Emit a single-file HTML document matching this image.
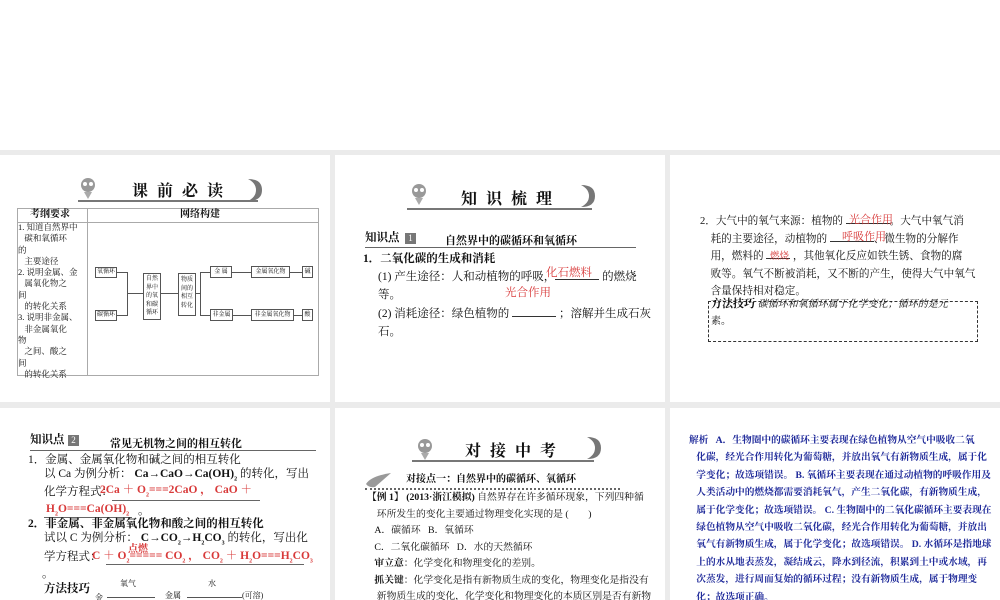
<!DOCTYPE html>
<html><head><meta charset="utf-8"><style>
*{margin:0;padding:0;box-sizing:border-box}
body{width:1000px;height:600px;background:#fff;position:relative;overflow:hidden;font-family:"Liberation Serif","Noto Serif CJK SC","Noto Sans CJK SC",serif;color:#111}
.bg{position:absolute;left:0;top:150px;width:1000px;height:450px;background:#ebebeb}
.s{position:absolute;background:#fff;overflow:hidden}
.a{position:absolute;white-space:nowrap}
.t{font-size:11.5px;line-height:18px}
.b{font-weight:bold}
.r{color:#d83a3a}
.hd{font-size:16px;font-weight:bold;letter-spacing:9px;font-family:"Noto Serif CJK SC",serif}
.ul{position:absolute;height:1px;background:#666}
.bx{position:absolute;border:1px solid #555;font-size:6px;line-height:8.5px;text-align:center;background:#fff;white-space:nowrap;overflow:hidden}
.ln{position:absolute;background:#555}
.bl{color:#1f2a9a;font-size:9.7px;font-weight:bold;line-height:17.4px}
</style></head><body>
<div class="bg"></div>

<!-- slide 1 -->
<div class="s" style="left:0;top:155px;width:330px;height:247px">
 <svg class="a" style="left:78px;top:22px" width="20" height="24" viewBox="0 0 20 24"><circle cx="10" cy="8" r="7" fill="#999"/><circle cx="7" cy="7" r="2" fill="#fff"/><circle cx="13" cy="7" r="2" fill="#fff"/><path d="M6 15 L10 22 L14 15" fill="#aaa"/></svg>
 <div class="a hd" style="left:132px;top:23px">课前必读</div>
 <div class="ul" style="left:78px;top:45px;width:180px;height:2px;background:#777"></div>
 <svg class="a" style="left:246px;top:22px" width="18" height="26"><path d="M2 2 Q16 2 16 13 Q16 24 2 24 Q10 20 10 13 Q10 6 2 2Z" fill="#777"/></svg>
 <div class="a" style="left:17px;top:53px;width:302px;height:168px;border:1px solid #aaa"></div>
 <div class="ln" style="left:17px;top:67px;width:302px;height:1px;background:#aaa"></div>
 <div class="ln" style="left:87px;top:53px;width:1px;height:168px;background:#aaa"></div>
 <div class="a b" style="left:30px;top:53px;font-size:10px;line-height:14px">考纲要求</div>
 <div class="a b" style="left:180px;top:53px;font-size:10px;line-height:14px">网络构建</div>
 <div class="a" style="left:18px;top:67px;font-size:8.5px;line-height:11.3px">1. 知道自然界中<br>&nbsp;&nbsp;&nbsp;碳和氧循环<br>的<br>&nbsp;&nbsp;&nbsp;主要途径<br>2. 说明金属、金<br>&nbsp;&nbsp;&nbsp;属氧化物之<br>间<br>&nbsp;&nbsp;&nbsp;的转化关系<br>3. 说明非金属、<br>&nbsp;&nbsp;&nbsp;非金属氧化<br>物<br>&nbsp;&nbsp;&nbsp;之间、酸之<br>间<br>&nbsp;&nbsp;&nbsp;的转化关系</div>
 <div class="bx" style="left:95px;top:112px;width:22px;height:11px">氧循环</div>
 <div class="bx" style="left:95px;top:155px;width:22px;height:11px">碳循环</div>
 <div class="ln" style="left:117px;top:117px;width:10px;height:1px"></div>
 <div class="ln" style="left:117px;top:160px;width:10px;height:1px"></div>
 <div class="ln" style="left:127px;top:117px;width:1px;height:44px"></div>
 <div class="ln" style="left:128px;top:138px;width:15px;height:1px"></div>
 <div class="bx" style="left:143px;top:118px;width:18px;height:47px;padding-top:1px">自然<br>界中<br>的氧<br>和碳<br>循环</div>
 <div class="ln" style="left:161px;top:138px;width:17px;height:1px"></div>
 <div class="bx" style="left:178px;top:118px;width:18px;height:43px;padding-top:2px">物质<br>间的<br>相互<br>转化</div>
 <div class="ln" style="left:196px;top:138px;width:5px;height:1px"></div>
 <div class="ln" style="left:200px;top:117px;width:1px;height:43px"></div>
 <div class="ln" style="left:200px;top:117px;width:10px;height:1px"></div>
 <div class="ln" style="left:200px;top:160px;width:10px;height:1px"></div>
 <div class="bx" style="left:210px;top:111px;width:22px;height:12px;line-height:10px">金 属</div>
 <div class="bx" style="left:210px;top:154px;width:23px;height:12px;line-height:10px">非金属</div>
 <div class="ln" style="left:232px;top:117px;width:19px;height:1px"></div>
 <div class="ln" style="left:233px;top:160px;width:18px;height:1px"></div>
 <div class="bx" style="left:251px;top:111px;width:39px;height:12px;line-height:10px">金属氧化物</div>
 <div class="bx" style="left:251px;top:154px;width:43px;height:12px;line-height:10px">非金属氧化物</div>
 <div class="ln" style="left:290px;top:117px;width:12px;height:1px"></div>
 <div class="ln" style="left:294px;top:160px;width:8px;height:1px"></div>
 <div class="bx" style="left:302px;top:111px;width:11px;height:12px;line-height:10px">碱</div>
 <div class="bx" style="left:302px;top:154px;width:11px;height:12px;line-height:10px">酸</div>
</div>

<!-- slide 2 -->
<div class="s" style="left:335px;top:155px;width:330px;height:247px">
 <svg class="a" style="left:74px;top:28px" width="20" height="24" viewBox="0 0 20 24"><circle cx="10" cy="8" r="7" fill="#999"/><circle cx="7" cy="7" r="2" fill="#fff"/><circle cx="13" cy="7" r="2" fill="#fff"/><path d="M6 15 L10 22 L14 15" fill="#aaa"/></svg>
 <div class="a hd" style="left:126px;top:31px">知识梳理</div>
 <div class="ul" style="left:72px;top:53px;width:185px;height:2px;background:#777"></div>
 <svg class="a" style="left:244px;top:28px" width="18" height="26"><path d="M2 2 Q16 2 16 13 Q16 24 2 24 Q10 20 10 13 Q10 6 2 2Z" fill="#777"/></svg>
 <div class="a t b" style="left:30px;top:74px">知识点</div>
 <div class="a" style="left:70px;top:78px;width:11px;height:11px;background:#777;color:#fff;font-size:9px;line-height:11px;text-align:center">1</div>
 <div class="a t b" style="left:110px;top:77px;font-size:11px">自然界中的碳循环和氧循环</div>
 <div class="ul" style="left:30px;top:92px;width:271px"></div>
 <div class="a t b" style="left:28px;top:95px">1．二氧化碳的生成和消耗</div>
 <div class="a t" style="left:43px;top:113px">(1) 产生途径：人和动植物的呼吸，<span style="display:inline-block;width:44px;border-bottom:1px solid #333"></span> 的燃烧</div>
 <div class="a t r" style="left:211px;top:109px">化石燃料</div>
 <div class="a t" style="left:43px;top:131px">等。</div>
 <div class="a t r" style="left:170px;top:129px">光合作用</div>
 <div class="a t" style="left:43px;top:150px">(2) 消耗途径：绿色植物的 <span style="display:inline-block;width:44px;border-bottom:1px solid #333"></span> ；溶解并生成石灰</div>
 <div class="a t" style="left:43px;top:168px">石。</div>
</div>

<!-- slide 3 -->
<div class="s" style="left:670px;top:155px;width:330px;height:247px">
 <div class="a t" style="left:30px;top:58px;line-height:17.6px;font-size:10.6px">2．大气中的氧气来源：植物的 <span style="display:inline-block;width:44px;border-bottom:1px solid #333"></span>。大气中氧气消<br>&nbsp;&nbsp;&nbsp;&nbsp;耗的主要途径，动植物的 <span style="display:inline-block;width:44px;border-bottom:1px solid #333"></span>、微生物的分解作<br>&nbsp;&nbsp;&nbsp;&nbsp;用，燃料的 <span style="display:inline-block;width:24px;border-bottom:1px solid #333"></span> ，其他氧化反应如铁生锈、食物的腐<br>&nbsp;&nbsp;&nbsp;&nbsp;败等。氧气不断被消耗，又不断的产生，使得大气中氧气<br>&nbsp;&nbsp;&nbsp;&nbsp;含量保持相对稳定。</div>
 <div class="a t r" style="left:179px;top:56px;font-size:11px">光合作用</div>
 <div class="a t r" style="left:172px;top:73px;font-size:11px">呼吸作用</div>
 <div class="a r" style="left:100px;top:93px;font-size:9.5px">燃烧</div>
 <div class="a" style="left:38px;top:146px;width:270px;height:41px;border:1px dashed #333"></div>
 <div class="a t b" style="left:41px;top:140px;font-size:11px">方法技巧 <span style="font-weight:normal;font-size:10px;font-style:italic">碳循环和氧循环属于化学变化；循环的是元</span></div>
 <div class="a t" style="left:41px;top:158px;font-size:10px">素。</div>
</div>

<!-- slide 4 -->
<div class="s" style="left:0;top:408px;width:330px;height:192px">
 <div class="a t b" style="left:30px;top:23px">知识点</div>
 <div class="a" style="left:68px;top:27px;width:11px;height:11px;background:#777;color:#fff;font-size:9px;line-height:11px;text-align:center">2</div>
 <div class="a t b" style="left:110px;top:27px;font-size:11px">常见无机物之间的相互转化</div>
 <div class="ul" style="left:30px;top:42px;width:286px"></div>
 <div class="a t" style="left:28px;top:43px">1．金属、金属氧化物和碱之间的相互转化</div>
 <div class="a t" style="left:44px;top:57px">以 Ca 为例分析： <b>Ca→CaO→Ca(OH)<sub style="font-size:6px">2</sub></b> 的转化，写出</div>
 <div class="a t" style="left:44px;top:75px">化学方程式：</div>
 <div class="a t r b" style="left:100px;top:73px">2Ca ＋ O<sub style="font-size:6px">2</sub>===2CaO ， CaO ＋</div>
 <div class="ul" style="left:112px;top:92px;width:148px"></div>
 <div class="a t r b" style="left:46px;top:92px">H<sub style="font-size:6px">2</sub>O===Ca(OH)<sub style="font-size:6px">2</sub></div>
 <div class="ul" style="left:44px;top:109px;width:88px"></div>
 <div class="a t" style="left:138px;top:94px">。</div>
 <div class="a t b" style="left:28px;top:107px">2．非金属、非金属氧化物和酸之间的相互转化</div>
 <div class="a t" style="left:44px;top:121px">试以 C 为例分析： <b>C→CO<sub style="font-size:6px">2</sub>→H<sub style="font-size:6px">2</sub>CO<sub style="font-size:6px">3</sub></b> 的转化，写出化</div>
 <div class="a t" style="left:44px;top:140px">学方程式：</div>
 <div class="a r b" style="left:128px;top:132px;font-size:10px">点燃</div>
 <div class="a t r b" style="left:92px;top:139px">C ＋ O<sub style="font-size:6px">2</sub>===== CO<sub style="font-size:6px">2</sub> ， CO<sub style="font-size:6px">2</sub> ＋ H<sub style="font-size:6px">2</sub>O===H<sub style="font-size:6px">2</sub>CO<sub style="font-size:6px">3</sub></div>
 <div class="ul" style="left:106px;top:156px;width:198px"></div>
 <div class="a t" style="left:42px;top:157px">。</div>
 <div class="a t b" style="left:44px;top:172px">方法技巧</div>
 <div class="a" style="left:120px;top:170px;font-size:8px">氧气</div>
 <div class="a" style="left:208px;top:170px;font-size:8px">水</div>
 <div class="a" style="left:95px;top:184px;font-size:8px">金</div>
 <div class="ln" style="left:107px;top:189px;width:48px;height:1px"></div>
 <div class="a" style="left:165px;top:182px;font-size:8px">金属</div>
 <div class="ln" style="left:187px;top:189px;width:55px;height:1px"></div>
 <div class="a" style="left:242px;top:182px;font-size:8px">(可溶)</div>
</div>

<!-- slide 5 -->
<div class="s" style="left:335px;top:408px;width:330px;height:192px">
 <svg class="a" style="left:80px;top:30px" width="20" height="24" viewBox="0 0 20 24"><circle cx="10" cy="8" r="7" fill="#999"/><circle cx="7" cy="7" r="2" fill="#fff"/><circle cx="13" cy="7" r="2" fill="#fff"/><path d="M6 15 L10 22 L14 15" fill="#aaa"/></svg>
 <div class="a hd" style="left:130px;top:30px">对接中考</div>
 <div class="ul" style="left:77px;top:52px;width:182px;height:2px;background:#777"></div>
 <svg class="a" style="left:250px;top:27px" width="18" height="26"><path d="M2 2 Q16 2 16 13 Q16 24 2 24 Q10 20 10 13 Q10 6 2 2Z" fill="#777"/></svg>
 <svg class="a" style="left:30px;top:64px" width="28" height="16"><path d="M1 12 Q6 4 26 1 Q18 8 10 15 Q4 16 1 12Z" fill="#999"/></svg>
 <div class="a b" style="left:71px;top:65px;font-size:10px;line-height:14px">对接点一：自然界中的碳循环、氧循环</div>
 <div class="ul" style="left:30px;top:80px;width:255px;border-top:2px dotted #666;background:none"></div>
 <div class="a t" style="left:32px;top:82px;font-size:9.8px;line-height:16.5px"><b>【例 1】</b> <b>(2013·浙江模拟)</b> 自然界存在许多循环现象，下列四种循<br>&nbsp;&nbsp;&nbsp;&nbsp;环所发生的变化主要通过物理变化实现的是 (&nbsp;&nbsp;&nbsp;&nbsp;&nbsp;&nbsp;&nbsp;&nbsp;)<br>&nbsp;&nbsp;&nbsp;A．碳循环&nbsp;&nbsp;&nbsp;B．氧循环<br>&nbsp;&nbsp;&nbsp;C．二氧化碳循环&nbsp;&nbsp;&nbsp;D．水的天然循环<br>&nbsp;&nbsp;&nbsp;<b>审立意</b>：化学变化和物理变化的差别。<br>&nbsp;&nbsp;&nbsp;<b>抓关键</b>：化学变化是指有新物质生成的变化，物理变化是指没有<br>&nbsp;&nbsp;&nbsp;&nbsp;新物质生成的变化，化学变化和物理变化的本质区别是否有新物</div>
</div>

<!-- slide 6 -->
<div class="s" style="left:670px;top:408px;width:330px;height:192px">
 <div class="a bl" style="left:19px;top:24px">解析&nbsp;&nbsp;&nbsp;A．生物圈中的碳循环主要表现在绿色植物从空气中吸收二氧<br>&nbsp;&nbsp;&nbsp;化碳，经光合作用转化为葡萄糖，并放出氧气有新物质生成，属于化<br>&nbsp;&nbsp;&nbsp;学变化；故选项错误。 B. 氧循环主要表现在通过动植物的呼吸作用及<br>&nbsp;&nbsp;&nbsp;人类活动中的燃烧都需要消耗氧气，产生二氧化碳，有新物质生成，<br>&nbsp;&nbsp;&nbsp;属于化学变化；故选项错误。 C. 生物圈中的二氧化碳循环主要表现在<br>&nbsp;&nbsp;&nbsp;绿色植物从空气中吸收二氧化碳，经光合作用转化为葡萄糖，并放出<br>&nbsp;&nbsp;&nbsp;氧气有新物质生成，属于化学变化；故选项错误。 D. 水循环是指地球<br>&nbsp;&nbsp;&nbsp;上的水从地表蒸发，凝结成云，降水到径流，积累到土中或水域，再<br>&nbsp;&nbsp;&nbsp;次蒸发，进行周而复始的循环过程；没有新物质生成，属于物理变<br>&nbsp;&nbsp;&nbsp;化；故选项正确。</div>
</div>
</body></html>
